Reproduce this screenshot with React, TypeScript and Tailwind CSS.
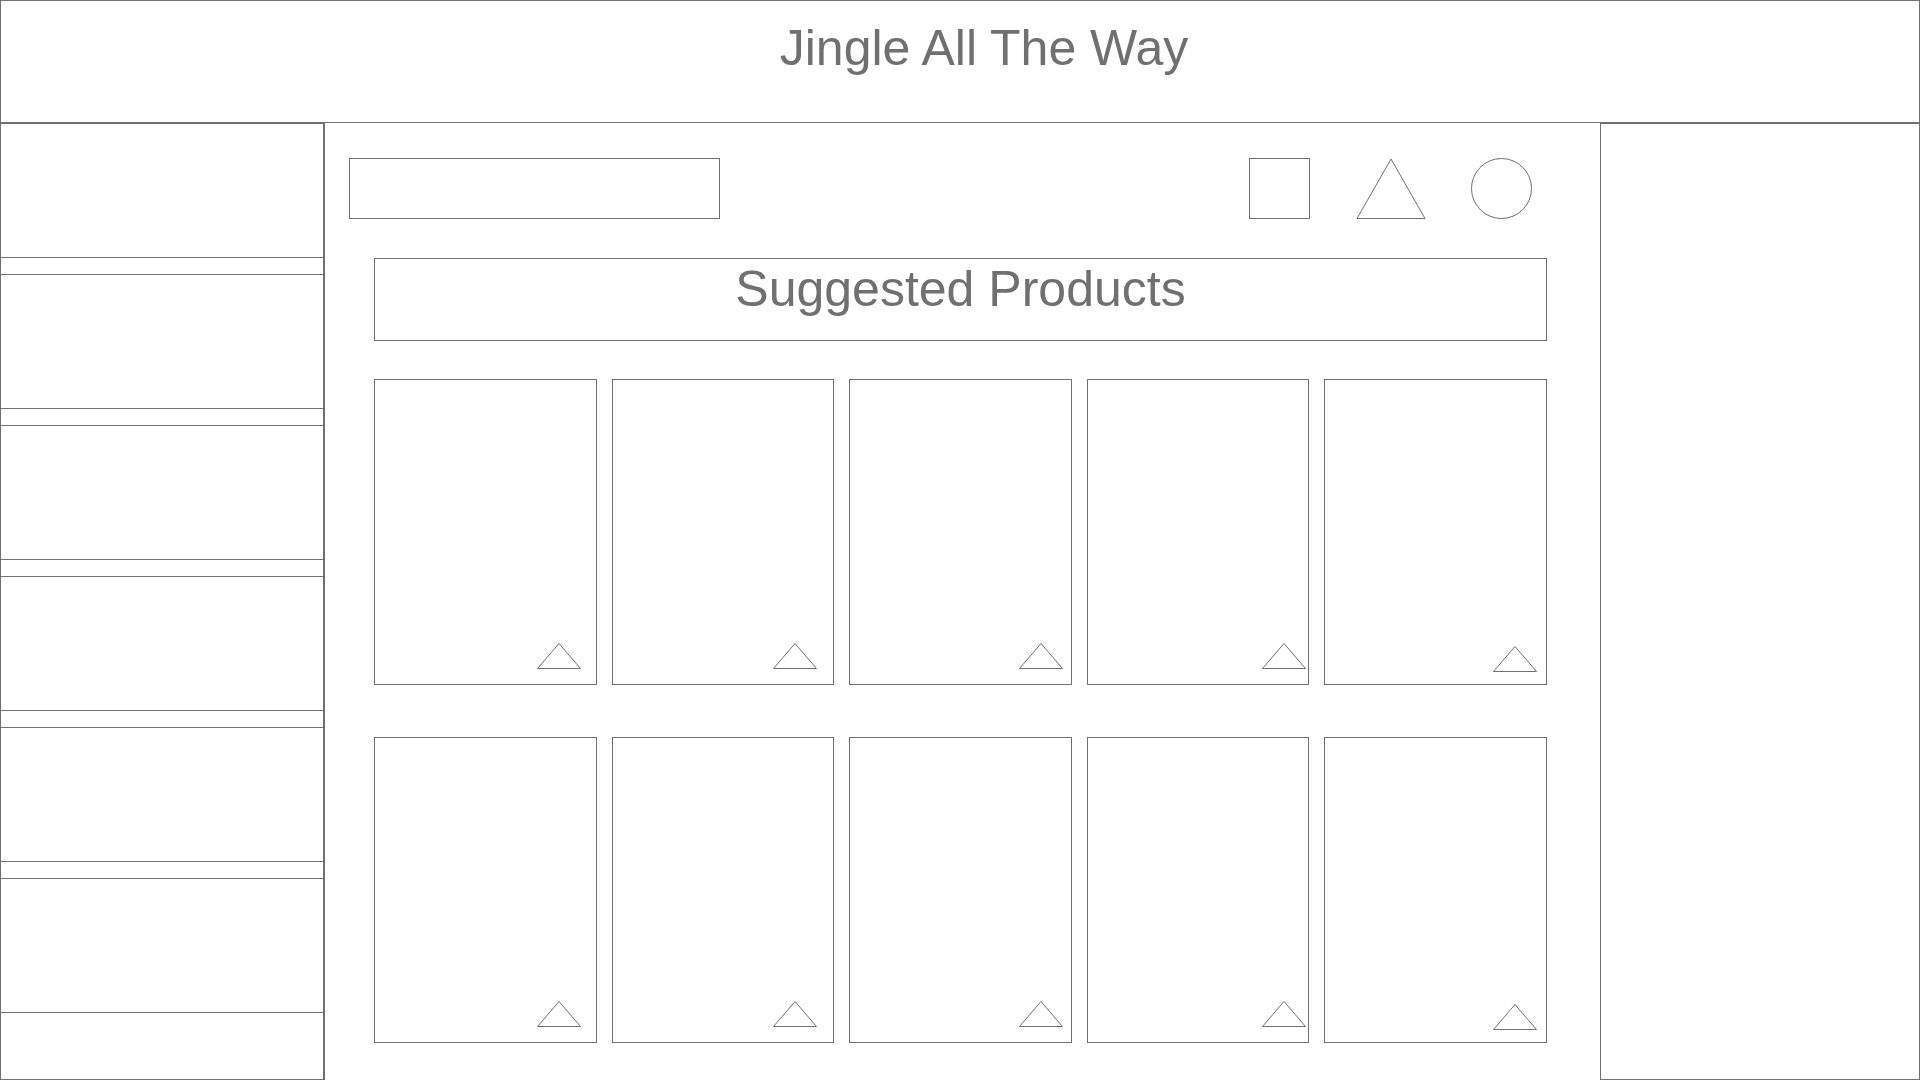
import React from 'react';

const cardPads = [
  'pr-[15px] pb-[15px]',
  'pr-[16px] pb-[15px]',
  'pr-[8px] pb-[15px]',
  'pr-[2px] pb-[15px]',
  'pr-[9px] pb-[12px]',
];

const Triangle: React.FC = () => (
  <svg width="44" height="26" viewBox="0 0 44 26" className="block">
    <polygon points="0.5,25.5 22,0.5 43.5,25.5" fill="none" stroke="#707070" strokeWidth="1" />
  </svg>
);

const ProductCard: React.FC<{ pad: string }> = ({ pad }) => (
  <div className={`h-[306px] border border-[#707070] flex items-end justify-end ${pad}`}>
    <Triangle />
  </div>
);

const Sidebar: React.FC = () => (
  <aside className="w-[324px] border border-[#707070] flex flex-col">
    {[0, 1, 2, 3, 4, 5].map((i) => (
      <React.Fragment key={i}>
        <div className="h-[134px] border-b border-[#707070]" />
        {i < 5 ? <div className="h-[17px] border-b border-[#707070]" /> : null}
      </React.Fragment>
    ))}
  </aside>
);

export default function App() {
  return (
    <div className="w-[1920px] h-[1080px] bg-white flex flex-col font-['Liberation_Sans',Arial,sans-serif] text-[#707070]">
      <header className="h-[123px] border border-[#707070] flex justify-center pl-[48px] pt-[22px]">
        <h1 className="text-[50px] leading-none font-normal">Jingle All The Way</h1>
      </header>

      <div className="flex flex-1 min-h-0">
        <Sidebar />

        <main className="w-[1276px] border-l border-[#707070] pt-[35px]">
          <div className="flex items-start pl-[24px]">
            <div className="w-[371px] h-[61px] border border-[#707070]" />
            <div className="ml-auto mr-[68px] flex items-start">
              <div className="w-[61px] h-[61px] border border-[#707070]" />
              <svg width="70" height="61" viewBox="0 0 70 61" className="block ml-[46px]">
                <polygon points="1,60.5 35,1 69,60.5" fill="none" stroke="#707070" strokeWidth="1" />
              </svg>
              <div className="ml-[45px] w-[61px] h-[61px] rounded-full border border-[#707070]" />
            </div>
          </div>

          <div className="ml-[49px] w-[1173px] mt-[39px] h-[83px] border border-[#707070] flex justify-center pt-[5px]">
            <h2 className="text-[50px] leading-none font-normal">Suggested Products</h2>
          </div>

          <div className="ml-[49px] w-[1173px] mt-[38px] grid grid-cols-5 gap-x-[15px] gap-y-[52px]">
            {[0, 1].map((row) =>
              cardPads.map((pad, i) => <ProductCard key={`${row}-${i}`} pad={pad} />),
            )}
          </div>
        </main>

        <aside className="w-[320px] border border-[#707070]" />
      </div>
    </div>
  );
}
